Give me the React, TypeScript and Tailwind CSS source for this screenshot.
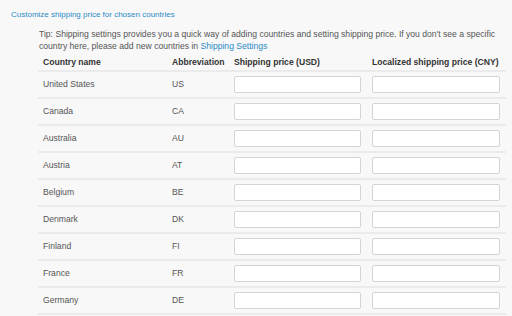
const rows: [string, string][] = [
  ['United States', 'US'],
  ['Canada', 'CA'],
  ['Australia', 'AU'],
  ['Austria', 'AT'],
  ['Belgium', 'BE'],
  ['Denmark', 'DK'],
  ['Finland', 'FI'],
  ['France', 'FR'],
  ['Germany', 'DE'],
];

export default function App() {
  return (
    <div
      className="w-[512px] h-[316px] overflow-hidden bg-[#f8f8f8] text-[8.6px] text-[#555]"
      style={{ fontFamily: '"Liberation Sans", Arial, sans-serif' }}
    >
      <div className="pt-[10px] pl-[11px] text-[8px] leading-[10px] text-[#2a8ac4]">
        Customize shipping price for chosen countries
      </div>
      <div className="pl-[38px] pr-[6px] mt-[8px]">
        <p className="pl-px leading-[12px] text-[#555]">
          Tip: Shipping settings provides you a quick way of adding countries and setting shipping price. If you
          don&apos;t see a specific country here, please add new countries in{' '}
          <span className="text-[#2a8ac4]">Shipping Settings</span>
        </p>
        <div className="grid grid-cols-[129px_62px_138px_139px] mt-[2px]">
          <div className="px-[5px] h-[18px] flex items-center font-bold text-[#333] border-b-2 border-[#ebebeb]">
            Country name
          </div>
          <div className="px-[5px] h-[18px] flex items-center font-bold text-[#333] border-b-2 border-[#ebebeb]">
            Abbreviation
          </div>
          <div className="px-[5px] h-[18px] flex items-center font-bold text-[#333] border-b-2 border-[#ebebeb]">
            Shipping price (USD)
          </div>
          <div className="px-[5px] h-[18px] flex items-center font-bold text-[#333] border-b-2 border-[#ebebeb]">
            Localized shipping price (CNY)
          </div>
          {rows.map(([name, abbr]) => (
            <div key={abbr} className="contents">
              <div className="px-[5px] pt-[6px] h-[27px] border-b-2 border-[#ebebeb]">{name}</div>
              <div className="px-[5px] pt-[6px] h-[27px] border-b-2 border-[#ebebeb]">{abbr}</div>
              <div className="px-[5px] pt-[4px] h-[27px] border-b-2 border-[#ebebeb]">
                <input className="block w-[127px] h-[17px] bg-white border border-[#d4d4d4] rounded-[2px]" />
              </div>
              <div className="px-[5px] pt-[4px] h-[27px] border-b-2 border-[#ebebeb]">
                <input className="block w-[128px] h-[17px] bg-white border border-[#d4d4d4] rounded-[2px]" />
              </div>
            </div>
          ))}
        </div>
      </div>
    </div>
  );
}
